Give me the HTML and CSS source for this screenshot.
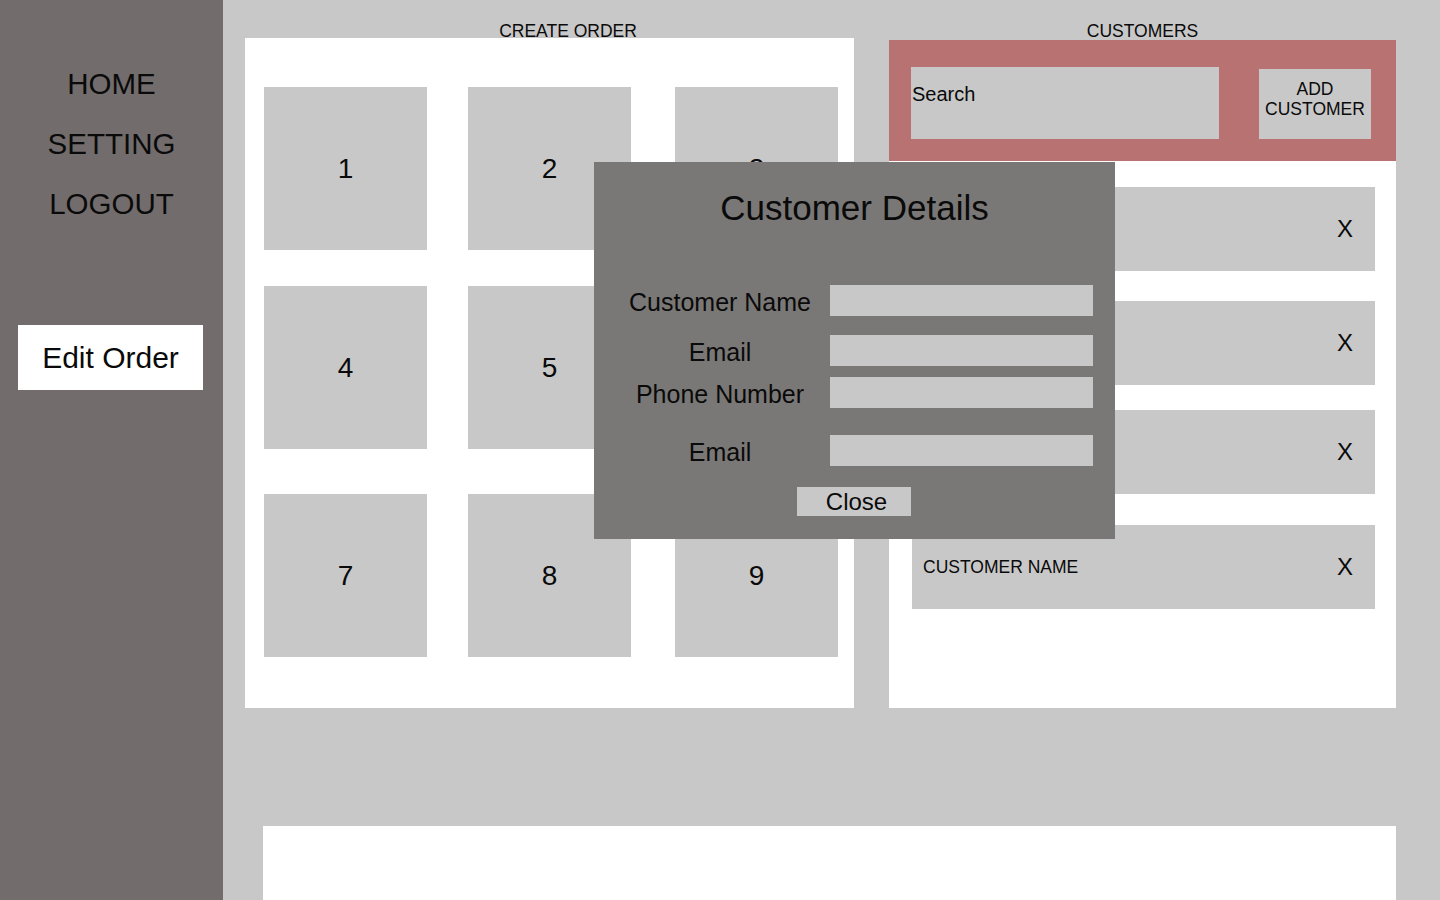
FILE: index.html
```html
<!DOCTYPE html>
<html lang="en">
<head>
    <meta charset="UTF-8">
    <meta name="viewport" content="width=device-width, initial-scale=1.0">
    <title>Orders</title>
    <link rel="stylesheet" href="styles.css">
</head>
<body>

    <!-- SIDEBAR -->
    <div class="sidebar">
        <div class="nav-item">HOME</div>
        <div class="nav-item">SETTING</div>
        <div class="nav-item">LOGOUT</div>
        <button class="edit-btn">Edit Order</button>
    </div>

    <!-- MAIN AREA -->
    <div class="main">
        <div class="top-row">
            <div class="order-col">
                <p class="col-title order-title">CREATE ORDER</p>
                <div class="order-panel">
                    <div class="tile">1</div>
                    <div class="tile">2</div>
                    <div class="tile">3</div>
                    <div class="tile">4</div>
                    <div class="tile">5</div>
                    <div class="tile">6</div>
                    <div class="tile">7</div>
                    <div class="tile">8</div>
                    <div class="tile">9</div>
                </div>
            </div>

            <div class="customer-col">
                <p class="col-title">CUSTOMERS</p>
                <div class="customer-panel">
                    <div class="customer-head">
                        <div class="search">Search</div>
                        <button class="add-btn">ADD<br>CUSTOMER</button>
                    </div>
                    <div class="customer-list">
                        <div class="customer-row"><span>CUSTOMER NAME</span><span class="remove">X</span></div>
                        <div class="customer-row"><span>CUSTOMER NAME</span><span class="remove">X</span></div>
                        <div class="customer-row"><span>CUSTOMER NAME</span><span class="remove">X</span></div>
                        <div class="customer-row"><span>CUSTOMER NAME</span><span class="remove">X</span></div>
                    </div>
                </div>
            </div>
        </div>

        <div class="bottom-panel"></div>
    </div>

    <!-- CUSTOMER DETAILS POPUP -->
    <div class="modal">
        <h2>Customer Details</h2>
        <div class="field first">
            <label>Customer Name</label>
            <input type="text">
        </div>
        <div class="field">
            <label>Email</label>
            <input type="text">
        </div>
        <div class="field tight">
            <label>Phone Number</label>
            <input type="text">
        </div>
        <div class="field spaced">
            <label>Email</label>
            <input type="text">
        </div>
        <button class="close-btn">Close</button>
    </div>

</body>
</html>
```

FILE: styles.css
```css
* { margin: 0; padding: 0; box-sizing: border-box; }

body {
    display: flex;
    height: 100vh;
    overflow: hidden;
    background: #c8c8c8;
    font-family: 'Liberation Sans', Arial, sans-serif;
    color: #0a0a0a;
}

button, input {
    font-family: inherit;
    color: #0a0a0a;
    border: none;
}

/* Sidebar */
.sidebar {
    width: 223px;
    flex-shrink: 0;
    background: #726d6c;
    padding-top: 54px;
    display: flex;
    flex-direction: column;
    align-items: center;
}

.nav-item {
    font-size: 29.5px;
    line-height: 60px;
    text-align: center;
}

.edit-btn {
    width: 185px;
    height: 65px;
    margin-top: 91px;
    margin-left: -2px;
    background: white;
    font-size: 30px;
}

/* Main */
.main {
    flex: 1;
    display: flex;
    flex-direction: column;
    padding: 0 44px 0 22px;
}

.top-row {
    display: flex;
    gap: 35px;
}

.col-title {
    font-size: 17.5px;
    line-height: 14px;
    padding-top: 24px;
    text-align: center;
}

.order-title { padding-left: 37px; }

.order-col { width: 609px; }

.order-panel {
    height: 670px;
    background: white;
    padding: 49px 16px 51px 19px;
    display: grid;
    grid-template-columns: 163px 163px 166px;
    grid-template-rows: 163px 163px 172px;
    gap: 36px 41px;
}

.tile {
    width: 163px;
    height: 163px;
    background: #c8c8c8;
    display: flex;
    align-items: center;
    justify-content: center;
    font-size: 28px;
}

.tile:nth-child(3n) { justify-self: end; }
.tile:nth-child(n+7) { align-self: end; }

.customer-col { width: 507px; }

.customer-panel {
    margin-top: 2px;
    height: 668px;
    background: white;
}

.customer-head {
    height: 121px;
    background: #b77271;
    padding: 27px 25px 22px 22px;
    display: flex;
    justify-content: space-between;
    align-items: flex-end;
}

.search {
    width: 308px;
    height: 72px;
    background: #c8c8c8;
    font-size: 20px;
    line-height: 23px;
    padding: 16px 1px 0;
}

.add-btn {
    width: 112px;
    height: 70px;
    background: #c8c8c8;
    font-size: 17.5px;
    line-height: 20px;
    padding-bottom: 11px;
}

.customer-list {
    padding: 26px 21px 0 23px;
    display: flex;
    flex-direction: column;
}

.customer-row {
    height: 84px;
    background: #c8c8c8;
    display: flex;
    align-items: center;
    justify-content: space-between;
    padding: 0 22px 0 11px;
    font-size: 17.5px;
}

.customer-row:nth-child(2) { margin-top: 30px; }
.customer-row:nth-child(3) { margin-top: 25px; }
.customer-row:nth-child(4) { margin-top: 31px; }

.remove { font-size: 24px; }

.bottom-panel {
    flex: 1;
    margin-top: 118px;
    margin-left: 18px;
    background: white;
}

/* Popup over the page */
.modal {
    position: absolute;
    left: 594px;
    top: 162px;
    width: 521px;
    height: 377px;
    background: #7a7876;
    padding: 26px 22px 0 16px;
    display: flex;
    flex-direction: column;
}

.modal h2 {
    font-size: 35px;
    font-weight: normal;
    line-height: 40px;
    text-align: center;
    padding-left: 6px;
}

.field {
    display: flex;
    height: 31px;
    margin-top: 19px;
}

.field.first { margin-top: 57px; }
.field.tight { margin-top: 11px; }
.field.spaced { margin-top: 27px; }

.field label {
    width: 220px;
    text-align: center;
    font-size: 25px;
    line-height: 28px;
    padding-top: 3px;
}

.field input {
    width: 263px;
    height: 31px;
    background: #c8c8c8;
}

.close-btn {
    align-self: center;
    width: 114px;
    height: 29px;
    margin-top: 21px;
    margin-left: 4px;
    background: #c8c8c8;
    font-size: 24px;
    padding-left: 6px;
}
```
